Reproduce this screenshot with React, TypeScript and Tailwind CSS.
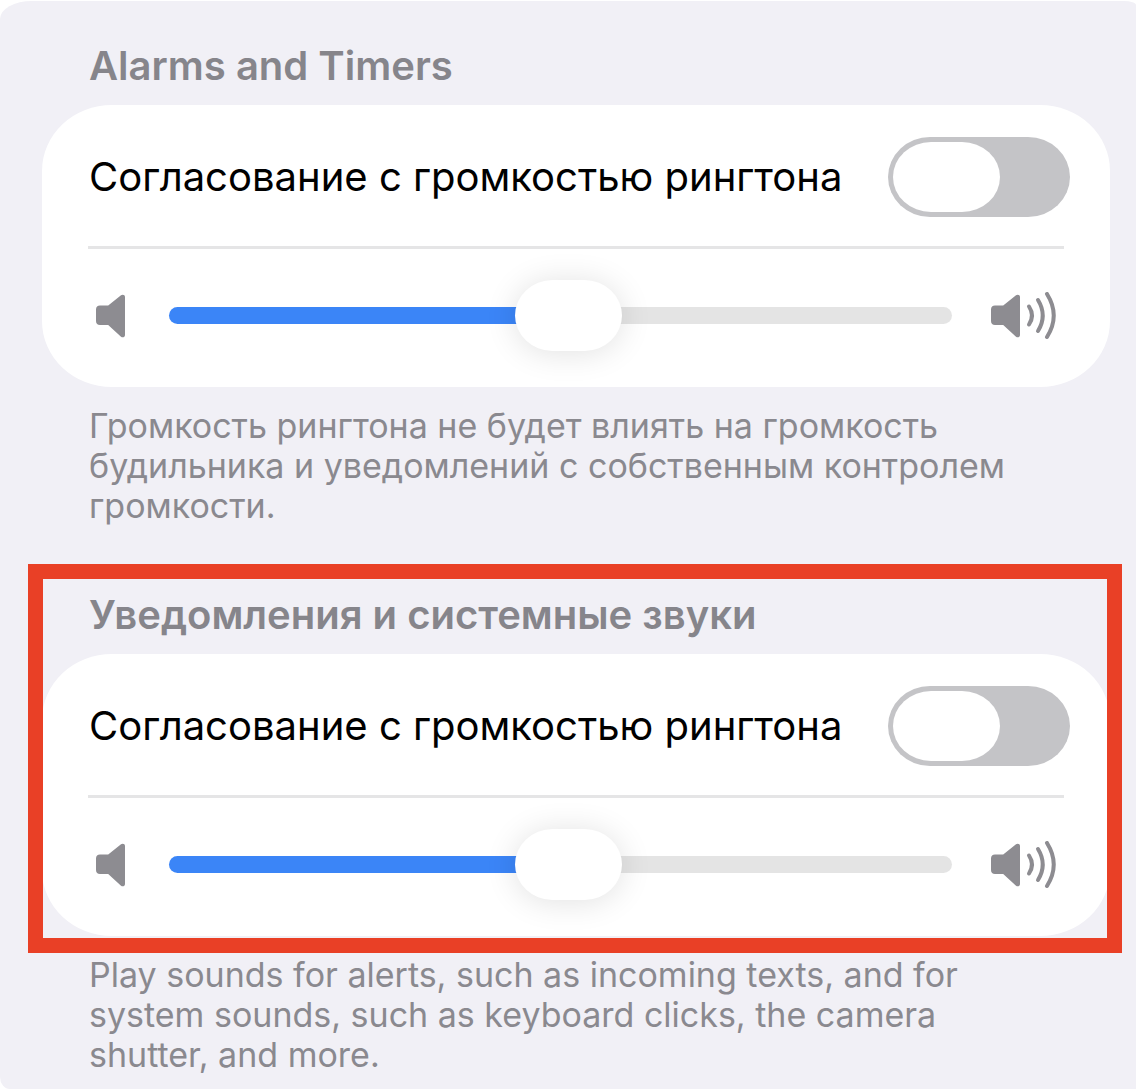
import { useId, useState } from "react";
import type { CSSProperties } from "react";

interface VolumeSectionProps {
  title: string;
  note: string;
  highlighted?: boolean;
}

const SPEAKER_PATH =
  "M4 11.5H12.2L25 1.3C26.6 0 29 .8 29 3V41C29 43.2 26.6 44 25 42.7L12.2 31H4C1.5 31 0 29.5 0 27V15.5C0 13 1.5 11.5 4 11.5Z";

function SpeakerIcon() {
  return (
    <svg className="h-11 w-[29px] shrink-0 text-[#8d8c91]" viewBox="0 0 29 44" fill="currentColor" aria-hidden="true">
      <path d={SPEAKER_PATH} />
    </svg>
  );
}

function SpeakerWavesIcon() {
  return (
    <svg className="h-12 w-[66px] shrink-0 text-[#8d8c91]" viewBox="0 -2 66 48" fill="currentColor" aria-hidden="true">
      <path d={SPEAKER_PATH} />
      <g fill="none" stroke="currentColor" strokeWidth="4" strokeLinecap="round">
        <path d="M38 12.5Q44 21.5 38 30.5" />
        <path d="M47 6Q56.5 21.5 47 37" />
        <path d="M56 0Q69.5 21.5 56 43" />
      </g>
    </svg>
  );
}

function VolumeSection({ title, note, highlighted = false }: VolumeSectionProps) {
  const [matchRingtone, setMatchRingtone] = useState(false);
  const [volume, setVolume] = useState(51.2);
  const switchId = useId();

  return (
    <section>
      <div className="relative">
        <h2 className="mb-[15px] pl-[47px] text-[40px] leading-12 font-semibold text-[#86858b]">{title}</h2>

        <div className="rounded-[70px/66px] bg-white">
          <div className="flex items-center justify-between pt-8 pr-10 pb-[29px] pl-[47px]">
            <label htmlFor={switchId} className="text-[40px] leading-12 text-black">
              Согласование с громкостью рингтона
            </label>
            <input
              id={switchId}
              type="checkbox"
              role="switch"
              checked={matchRingtone}
              onChange={(e) => setMatchRingtone(e.target.checked)}
              className="flex h-20 w-[182px] shrink-0 appearance-none items-center rounded-[42px/40px] bg-[#c4c4c7] px-[5px] before:h-[70px] before:w-[107px] before:rounded-[38px/35px] before:bg-white checked:justify-end checked:bg-[#34c759]"
            />
          </div>

          <hr className="mx-[46px] border-0 border-t-3 border-[#e5e5e6]" />

          <div className="flex items-center pt-[31px] pr-[53px] pb-9 pl-[54px]">
            <SpeakerIcon />
            <input
              type="range"
              aria-label={title}
              step={0.1}
              value={volume}
              onChange={(e) => setVolume(Number(e.target.value))}
              style={{ "--volume": `${volume}%` } as CSSProperties}
              className="mr-[39px] ml-11 h-[71px] min-w-0 flex-1 appearance-none bg-transparent [&::-webkit-slider-runnable-track]:h-[17px] [&::-webkit-slider-runnable-track]:rounded-full [&::-webkit-slider-runnable-track]:bg-[linear-gradient(to_right,#3b85f7_var(--volume),#e4e4e4_var(--volume))] [&::-webkit-slider-thumb]:-mt-[27px] [&::-webkit-slider-thumb]:h-[71px] [&::-webkit-slider-thumb]:w-[107px] [&::-webkit-slider-thumb]:appearance-none [&::-webkit-slider-thumb]:rounded-[38px/36px] [&::-webkit-slider-thumb]:bg-white [&::-webkit-slider-thumb]:shadow-[0_2px_32px_rgba(0,0,0,0.12)]"
            />
            <SpeakerWavesIcon />
          </div>
        </div>

        {/* Call-out frame around the heading and card */}
        {highlighted && (
          <div className="pointer-events-none absolute -top-[27px] -right-3 -bottom-[17px] -left-[14px] border-[15px] border-[#e94026]" />
        )}
      </div>

      <p className="mt-[19px] px-[47px] text-[34px] leading-10 text-[#8a898f]">{note}</p>
    </section>
  );
}

export default function App() {
  return (
    <div className="bg-white pt-px font-['Inter','Liberation_Sans',sans-serif]">
      <main className="flex min-h-[calc(100vh-1px)] flex-col gap-[65px] rounded-tl-[32px_18px] rounded-tr-[12px_4px] rounded-bl-[10px_12px] bg-[#f1f0f6] pt-[41px] pr-[26px] pb-3 pl-[42px]">
        <VolumeSection
          title="Alarms and Timers"
          note="Громкость рингтона не будет влиять на громкость будильника и уведомлений с собственным контролем громкости."
        />
        <VolumeSection
          title="Уведомления и системные звуки"
          note="Play sounds for alerts, such as incoming texts, and for system sounds, such as keyboard clicks, the camera shutter, and more."
          highlighted
        />
      </main>
    </div>
  );
}
